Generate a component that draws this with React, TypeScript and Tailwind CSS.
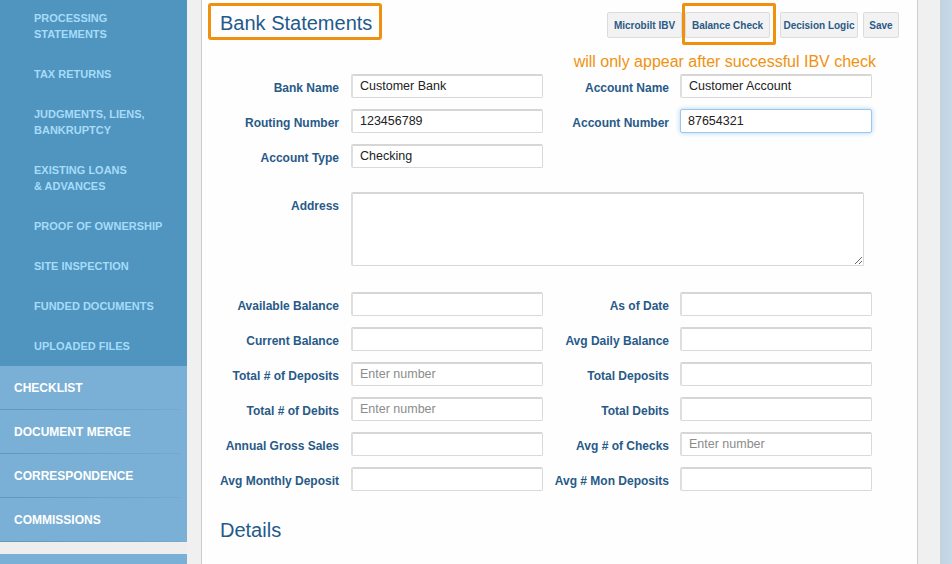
import React from "react";

const subItems = [
  ["PROCESSING", "STATEMENTS"],
  ["TAX RETURNS"],
  ["JUDGMENTS, LIENS,", "BANKRUPTCY"],
  ["EXISTING LOANS", "& ADVANCES"],
  ["PROOF OF OWNERSHIP"],
  ["SITE INSPECTION"],
  ["FUNDED DOCUMENTS"],
  ["UPLOADED FILES"],
];

const mainItems = ["CHECKLIST", "DOCUMENT MERGE", "CORRESPONDENCE", "COMMISSIONS"];

type Field = { label: string; value?: string; placeholder?: string; focused?: boolean } | null;

const topRows: [Field, Field][] = [
  [{ label: "Bank Name", value: "Customer Bank" }, { label: "Account Name", value: "Customer Account" }],
  [{ label: "Routing Number", value: "123456789" }, { label: "Account Number", value: "87654321", focused: true }],
  [{ label: "Account Type", value: "Checking" }, null],
];

const bottomRows: [Field, Field][] = [
  [{ label: "Available Balance" }, { label: "As of Date" }],
  [{ label: "Current Balance" }, { label: "Avg Daily Balance" }],
  [{ label: "Total # of Deposits", placeholder: "Enter number" }, { label: "Total Deposits" }],
  [{ label: "Total # of Debits", placeholder: "Enter number" }, { label: "Total Debits" }],
  [{ label: "Annual Gross Sales" }, { label: "Avg # of Checks", placeholder: "Enter number" }],
  [{ label: "Avg Monthly Deposit" }, { label: "Avg # Mon Deposits" }],
];

function Input({ f }: { f: NonNullable<Field> }) {
  return (
    <input
      readOnly
      value={f.value ?? ""}
      placeholder={f.placeholder}
      className={`h-[24px] w-[192px] rounded-[2px] bg-white px-[7px] pb-[1px] text-[12.5px] text-[#222] outline-none placeholder:text-[#8c8c8c] ${
        f.focused
          ? "border border-[#9cc6ea] shadow-[0_0_5px_rgba(102,175,233,0.55)]"
          : "border border-[#d9d9d9] border-t-2 border-l-2 border-t-[#d6d6d6] border-l-[#dedede]"
      }`}
    />
  );
}

function Row({ row }: { row: [Field, Field] }) {
  return (
    <div className="flex h-[24px] items-start">
      <div className="w-[149px] pr-[12px] pt-[7px] text-right text-[12px] font-bold leading-[14px] text-[#285a88]">
        {row[0]?.label}
      </div>
      {row[0] && <Input f={row[0]} />}
      <div className="w-[137px] pr-[11px] pt-[7px] text-right text-[12px] font-bold leading-[14px] text-[#285a88]">
        {row[1]?.label}
      </div>
      {row[1] && <Input f={row[1]} />}
    </div>
  );
}

export default function App() {
  return (
    <div className="flex h-[564px] w-[952px] overflow-hidden bg-[#f0f0f0] font-['Liberation_Sans',Arial,sans-serif]">
      {/* Sidebar */}
      <div className="flex w-[187px] shrink-0 flex-col">
        <div className="h-[366px] overflow-hidden bg-[#5094c0]">
          <div className="-mt-[2px]">
            {subItems.map((lines) => (
              <div key={lines[0]} className="py-[12px] pl-[34px] text-[11px] font-bold leading-[16px] text-[#a6dcf8]">
                {lines.map((l) => (
                  <div key={l}>{l}</div>
                ))}
              </div>
            ))}
          </div>
        </div>
        <div className="bg-[#7ab0d5]">
          {mainItems.map((m) => (
            <div key={m} className="relative flex h-[44px] items-center pl-[14px] text-[12px] font-bold text-white">
              <span className="-mt-[1px]">{m}</span>
              <div className="absolute bottom-0 left-0 h-px w-[180px] bg-gradient-to-r from-[#6596b8] to-[#74a9cd]" />
            </div>
          ))}
        </div>
        <div className="h-[12px] bg-[#eeeeee]" />
        <div className="flex-1 bg-[#7ab0d5]" />
      </div>

      <div className="w-[14px] shrink-0" />

      {/* Main panel */}
      <div className="w-[717px] shrink-0 border-x border-[#cccccc] bg-[#fefefe]">
        <div className="relative flex h-[45px] items-start justify-between">
          <div className="ml-[6px] mt-[3px] flex h-[37px] items-center rounded-[3px] border-[3px] border-[#f0900f] pl-[9px] pr-[7px] pt-[2px] text-[20px] leading-none text-[#1e5a8c]">
            Bank Statements
          </div>
          <div className="mr-[18px] mt-[12px] flex">
            <button className="h-[26px] w-[75px] rounded-[2px] border border-[#dcdcdc] bg-[#f2f2f2] text-[10px] font-bold text-[#2a5a85]">Microbilt IBV</button>
            <button className="ml-[3px] h-[26px] w-[85px] rounded-[2px] border border-[#dcdcdc] bg-[#f2f2f2] text-[10px] font-bold text-[#2a5a85]">Balance Check</button>
            <button className="ml-[10px] h-[26px] w-[78px] rounded-[2px] border border-[#dcdcdc] bg-[#f2f2f2] text-[10px] font-bold text-[#2a5a85]">Decision Logic</button>
            <button className="ml-[5px] h-[26px] w-[36px] rounded-[2px] border border-[#dcdcdc] bg-[#f2f2f2] text-[10px] font-bold text-[#2a5a85]">Save</button>
          </div>
          {/* annotation box */}
          <div className="absolute left-[480px] top-[3px] h-[42px] w-[94px] rounded-[2px] border-[3px] border-[#f0900f]" />
        </div>
        <div className="mt-[7px] flex justify-end pr-[41px] text-[16px] leading-[20px] text-[#f0920f]">
          will only appear after successful IBV check
        </div>

        <div className="mt-[2px] flex flex-col gap-[11px]">
          {topRows.map((r, i) => (
            <Row key={i} row={r} />
          ))}
        </div>

        <div className="mt-[24px] flex items-start">
          <div className="w-[149px] pr-[12px] pt-[7px] text-right text-[12px] font-bold leading-[14px] text-[#285a88]">Address</div>
          <textarea
            readOnly
            className="h-[74px] w-[513px] rounded-[2px] border border-[#d9d9d9] border-t-2 border-l-2 border-t-[#d6d6d6] border-l-[#dedede] bg-white outline-none"
          />
        </div>

        <div className="mt-[26px] flex flex-col gap-[11px]">
          {bottomRows.map((r, i) => (
            <Row key={i} row={r} />
          ))}
        </div>

        <div className="ml-[18px] mt-[27px] text-[20px] leading-[24px] text-[#1e5a8c]">Details</div>
      </div>

      <div className="w-[22px] shrink-0" />
      <div className="flex-1 bg-gradient-to-r from-[#c0d3e1] to-[#c8d9e6]" />
    </div>
  );
}
